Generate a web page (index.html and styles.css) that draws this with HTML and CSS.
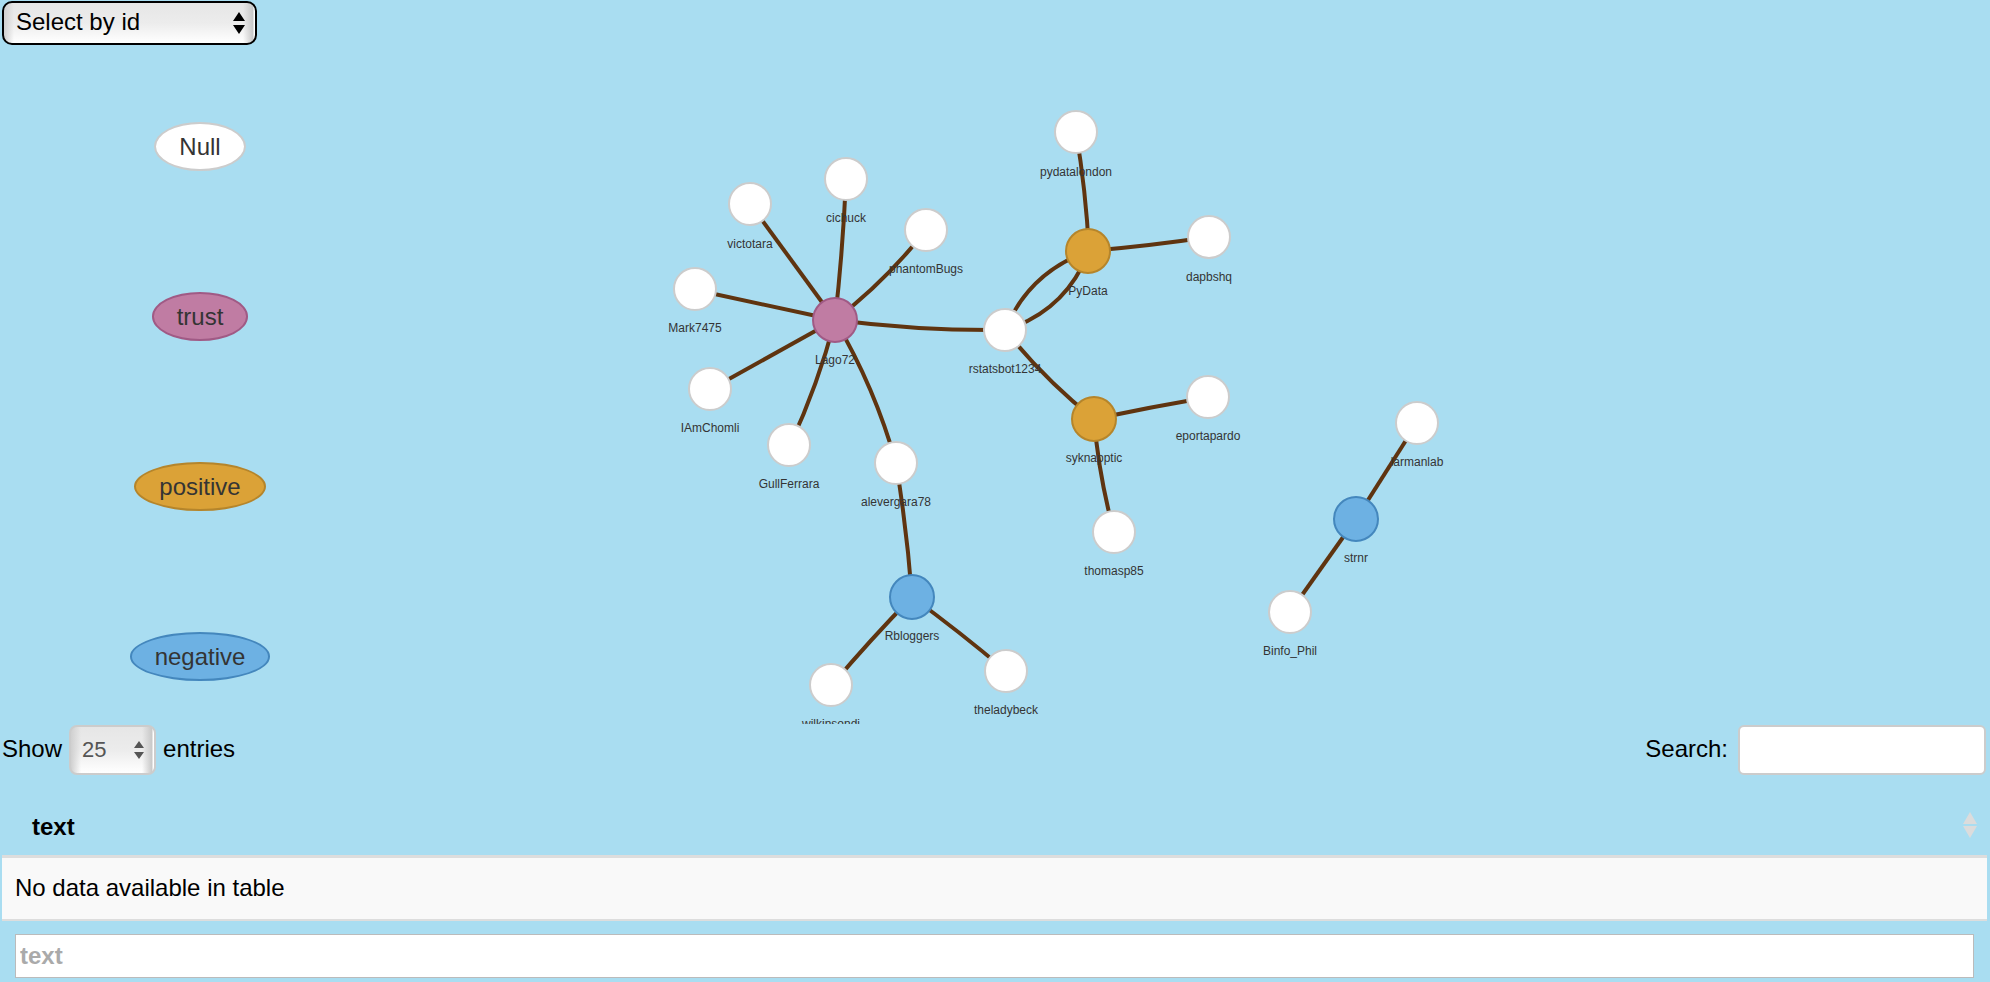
FILE: index.html
```html
<!DOCTYPE html>
<html lang="en">
<head>
<meta charset="utf-8">
<title>Network sentiment</title>
<link rel="stylesheet" href="styles.css">
</head>
<body>
<header class="toolbar">
  <div class="picker picker-id">
    <select class="picker-select" aria-label="Select by id"><option>Select by id</option></select>
    <svg class="picker-arrows" width="12" height="22" viewBox="0 0 12 22" aria-hidden="true"><path d="M6 0 12 9H0ZM6 22 12 13H0Z"/></svg>
  </div>
</header>

<main>
  <section class="network">
    <ul class="legend">
      <li class="legend-item none">Null</li>
      <li class="legend-item trust">trust</li>
      <li class="legend-item positive">positive</li>
      <li class="legend-item negative">negative</li>
    </ul>
    <svg class="graph" viewBox="397 45 1592 679" role="img" aria-label="Account network">
      <g class="edges">
        <path d="M834 320Q920 331 1004 330"/>
        <path d="M834 320Q874 388 895 463"/>
        <path d="M834 320Q817 385 789 445"/>
        <path d="M834 320L710 389"/>
        <path d="M834 320L695 290"/>
        <path d="M834 320L750 205"/>
        <path d="M834 320Q842 249 845 179"/>
        <path d="M834 320Q885 281 925 230"/>
        <path d="M895 463Q906 530 911 597"/>
        <path d="M911 597Q869 640 831 685"/>
        <path d="M911 597Q959 632 1005 671"/>
        <path d="M1004 330Q1028 272 1088 251"/>
        <path d="M1004 330Q1065 311 1088 251"/>
        <path d="M1004 330Q1043 379 1093 419"/>
        <path d="M1088 251Q1085 191 1075 132"/>
        <path d="M1088 251Q1148 246 1208 237"/>
        <path d="M1093 419Q1150 407 1208 397"/>
        <path d="M1093 419Q1098 477 1113 532"/>
        <path d="M1355 519L1416 423"/>
        <path d="M1355 519L1289 612"/>
      </g>
      <g class="nodes">
        <g class="none" transform="translate(1075 132)"><circle r="21"/><text y="44">pydatalondon</text></g>
        <g class="none" transform="translate(1208 237)"><circle r="21"/><text y="44">dapbshq</text></g>
        <g class="positive" transform="translate(1087 251)"><circle r="22"/><text y="44">PyData</text></g>
        <g class="none" transform="translate(1004 330)"><circle r="21"/><text y="43">rstatsbot1234</text></g>
        <g class="positive" transform="translate(1093 419)"><circle r="22"/><text y="43">syknapptic</text></g>
        <g class="none" transform="translate(1207 397)"><circle r="21"/><text y="43">eportapardo</text></g>
        <g class="none" transform="translate(1113 532)"><circle r="21"/><text y="43">thomasp85</text></g>
        <g class="none" transform="translate(845 179)"><circle r="21"/><text y="43">cichuck</text></g>
        <g class="none" transform="translate(749 204)"><circle r="21"/><text y="44">victotara</text></g>
        <g class="none" transform="translate(925 230)"><circle r="21"/><text y="43">phantomBugs</text></g>
        <g class="none" transform="translate(694 289)"><circle r="21"/><text y="43">Mark7475</text></g>
        <g class="none" transform="translate(709 389)"><circle r="21"/><text y="43">IAmChomli</text></g>
        <g class="none" transform="translate(788 445)"><circle r="21"/><text y="43">GullFerrara</text></g>
        <g class="none" transform="translate(895 463)"><circle r="21"/><text y="43">alevergara78</text></g>
        <g class="trust" transform="translate(834 320)"><circle r="22"/><text y="44">Lago72</text></g>
        <g class="negative" transform="translate(911 597)"><circle r="22"/><text y="43">Rbloggers</text></g>
        <g class="none" transform="translate(830 685)"><circle r="21"/><text y="43">wilkinsondi</text></g>
        <g class="none" transform="translate(1005 671)"><circle r="21"/><text y="43">theladybeck</text></g>
        <g class="none" transform="translate(1416 423)"><circle r="21"/><text y="43">larmanlab</text></g>
        <g class="negative" transform="translate(1355 519)"><circle r="22"/><text y="43">strnr</text></g>
        <g class="none" transform="translate(1289 612)"><circle r="21"/><text y="43">Binfo_Phil</text></g>
      </g>
    </svg>
  </section>

  <section class="records">
    <div class="controls">
      <div class="control">
        <label for="length">Show</label>
        <div class="picker picker-length">
          <select class="picker-select" id="length"><option>25</option></select>
          <svg class="picker-arrows" width="10" height="18" viewBox="0 0 10 18" aria-hidden="true"><path d="M5 0 10 7H0ZM5 18 10 11H0Z"/></svg>
        </div>
        <span>entries</span>
      </div>
      <div class="control">
        <label for="search">Search:</label>
        <input class="search" id="search" type="search">
      </div>
    </div>
    <table class="data">
      <thead>
        <tr><th><button class="sort" type="button"><span>text</span><svg width="14" height="26" viewBox="0 0 14 26" aria-hidden="true"><path d="M7 0 14 12H0ZM7 26 14 14H0Z"/></svg></button></th></tr>
      </thead>
      <tbody>
        <tr><td>No data available in table</td></tr>
      </tbody>
      <tfoot>
        <tr><th><input class="filter" type="text" placeholder="text" aria-label="Filter text"></th></tr>
      </tfoot>
    </table>
  </section>
</main>
</body>
</html>
```
FILE: styles.css
```css
* { box-sizing: border-box; }

body {
  margin: 0;
  background: #a9ddf1;
  color: #000;
  font: 24px/32px "Liberation Sans", Arial, sans-serif;
}

button, input, select { font: inherit; color: inherit; }

.toolbar { display: flex; padding: 1px 2px 0; }

/* Drop-downs */
.picker { position: relative; }

.picker-select {
  appearance: none;
  display: block;
  width: 100%;
  border: 2px solid #000;
  border-radius: 10px;
  background:
    linear-gradient(90deg, #d0d0d0, rgba(225, 225, 225, 0) 10px),
    linear-gradient(270deg, #fff 1px, #c8c8c8 2px, rgba(225, 225, 225, 0) 12px),
    linear-gradient(#e6e6e6, #ececec 50%, #fff);
}

.picker-arrows {
  position: absolute;
  top: 50%;
  right: 12px;
  transform: translateY(-50%);
  pointer-events: none;
}

.picker-id { width: 255px; }
.picker-id .picker-select { height: 44px; padding: 0 32px 2px 12px; }

.picker-length { width: 87px; color: #555; font-size: 22px; }
.picker-length .picker-select {
  height: 50px;
  padding: 0 28px 0 11px;
  border-color: #ccc;
  border-radius: 8px;
}
.picker-length .picker-arrows { fill: #555; }

/* Legend and graph */
.network { display: grid; grid-template-columns: 1fr 4fr; }

.legend {
  display: flex;
  flex-direction: column;
  align-items: center;
  gap: 121px;
  margin: 0;
  padding: 77px 0 0 2px;
  list-style: none;
}

.legend-item {
  padding: 7px 23px 6px;
  border: 2px solid var(--line);
  border-radius: 50%;
  background: var(--fill);
  color: #343434;
}

.none { --fill: #fff; --line: #ccc; }
.trust { --fill: #c07ca3; --line: #a05a85; }
.positive { --fill: #dba237; --line: #b5852b; }
.negative { --fill: #6db1e3; --line: #4487bd; }

.graph { display: block; width: 100%; }
.edges path { fill: none; stroke: #5f3410; stroke-width: 4; }
.nodes circle { fill: var(--fill); stroke: var(--line); stroke-width: 2; }
.nodes text { fill: #343434; font-size: 12px; text-anchor: middle; }

/* Records */
.controls { display: flex; justify-content: space-between; padding: 1px 4px 0 2px; }
.control { display: flex; align-items: flex-start; gap: 7px; }
.control > label, .control > span { padding-top: 8px; }
.search {
  width: 248px;
  height: 50px;
  margin-left: 3px;
  border: 2px solid #ccc;
  border-radius: 6px;
  background: #fff;
}

.data { width: calc(100% - 5px); margin: 17px 3px 0 2px; border-collapse: collapse; }
.data th { padding: 0; text-align: left; }
.data thead th { border-bottom: 3px solid #ddd; }
.data td { padding: 14px 13px 15px; border-bottom: 2px solid #ddd; background: #f9f9f9; }
.data tfoot th { padding: 13px; }

.sort {
  display: flex;
  align-items: center;
  justify-content: space-between;
  width: 100%;
  height: 63px;
  padding: 2px 10px 0 30px;
  border: 0;
  background: none;
  font-weight: bold;
}
.sort span { padding-top: 4px; }
.sort svg { fill: #dcdcdc; }

.filter {
  display: block;
  width: 100%;
  height: 44px;
  padding: 0 4px;
  border: 1px solid #bbb;
  background: #fff;
}
.filter::placeholder { color: #aaa; }
```
